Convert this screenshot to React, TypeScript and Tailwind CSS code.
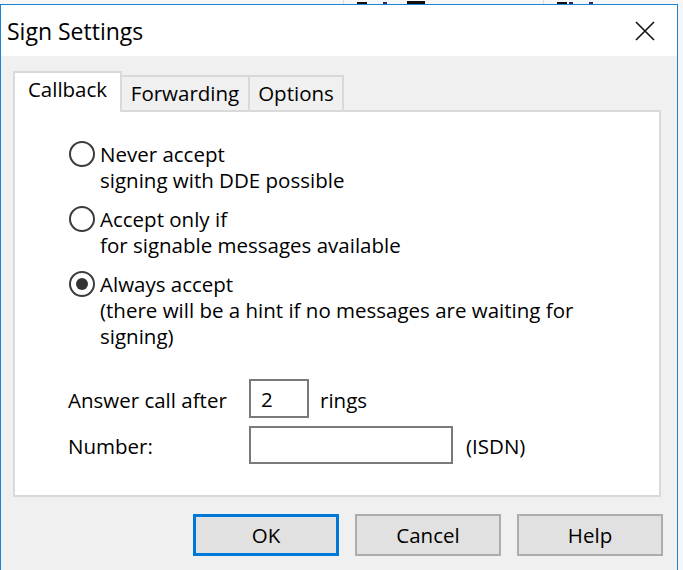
import React from "react";

const Radio = ({ checked }: { checked?: boolean }) => (
  <div className="h-[26px] flex items-center shrink-0">
    <div className="w-[26px] h-[26px] rounded-full border-2 border-[#3c3c3c] bg-white flex items-center justify-center">
      {checked && <div className="w-[12px] h-[12px] rounded-full bg-[#333333]" />}
    </div>
  </div>
);

const RadioOption = ({ checked, lines }: { checked?: boolean; lines: string[] }) => (
  <div className="flex gap-[5px]">
    <Radio checked={checked} />
    <div className="leading-[26px]">
      {lines.map((l) => (
        <div key={l}>{l}</div>
      ))}
    </div>
  </div>
);

// strip of the window lying behind the dialog
const BehindStrip = () => (
  <div className="flex items-end h-[4px] bg-[#f7f7f7]">
    <div className="w-[343px] shrink-0" />
    <div className="w-[1px] h-[4px] bg-[#dcdcdc] shrink-0" />
    <div className="w-[13px] shrink-0" />
    <div className="w-[10px] h-[2px] bg-[#111] shrink-0" />
    <div className="w-[16px] shrink-0" />
    <div className="w-[4px] h-[2px] bg-[#2a2a6a] shrink-0" />
    <div className="w-[20px] shrink-0" />
    <div className="w-[18px] h-[3px] bg-[#111] shrink-0" />
    <div className="w-[118px] shrink-0" />
    <div className="w-[1px] h-[4px] bg-[#dcdcdc] shrink-0" />
    <div className="w-[13px] shrink-0" />
    <div className="w-[10px] h-[2px] bg-[#111] shrink-0" />
    <div className="w-[2px] shrink-0" />
    <div className="w-[4px] h-[2px] bg-[#2a2a6a] shrink-0" />
    <div className="w-[16px] shrink-0" />
    <div className="w-[4px] h-[2px] bg-[#2a2a6a] shrink-0" />
  </div>
);

export default function App() {
  return (
    <div className="w-[683px] h-[570px] overflow-hidden bg-[#f5f5f5] flex flex-col font-['Open_Sans',sans-serif] text-black text-[20.5px]">
      <BehindStrip />
      <div className="flex flex-1">
        <div className="w-[678px] flex flex-col border-l border-r border-t border-[#1883d7] bg-[#f0f0f0]">
          {/* Title bar */}
          <div className="h-[51px] bg-white flex items-center justify-between pl-[6px] pr-[22px]">
            <span className="text-[23px] leading-none pt-[2px]">Sign Settings</span>
            <svg width="20" height="20" viewBox="0 0 20 20" className="shrink-0">
              <path d="M1 1 L19 19 M19 1 L1 19" stroke="#111" strokeWidth="1.6" fill="none" />
            </svg>
          </div>

          {/* Body */}
          <div className="flex-1 flex flex-col pt-[15px]">
            {/* Tabs */}
            <div className="flex items-end pl-[12px]">
              <div className="relative z-10 w-[109px] h-[41px] -mb-[2px] border-2 border-b-0 border-[#d9d9d9] bg-white flex items-center justify-center pb-[6px]">
                Callback
              </div>
              <div className="-ml-[2px] w-[130px] h-[35px] border-2 border-b-0 border-[#d9d9d9] bg-[#f0f0f0] flex items-center justify-center">
                Forwarding
              </div>
              <div className="-ml-[2px] w-[96px] h-[35px] border-2 border-b-0 border-[#d9d9d9] bg-[#f0f0f0] flex items-center justify-center">
                Options
              </div>
            </div>

            {/* Panel */}
            <div className="ml-[12px] w-[648px] h-[387px] border-2 border-[#d9d9d9] bg-white pt-[29px] pl-[53px]">
              <div className="ml-[1px] flex flex-col gap-[13px]">
                <RadioOption lines={["Never accept", "signing with DDE possible"]} />
                <RadioOption lines={["Accept only if", "for signable messages available"]} />
                <RadioOption
                  checked
                  lines={["Always accept", "(there will be a hint if no messages are waiting for", "signing)"]}
                />
              </div>

              <div className="mt-[30px] flex items-center h-[39px]">
                <div className="w-[181px] pt-[4px]">Answer call after</div>
                <div className="w-[60px] h-[39px] border-2 border-[#7a7a7a] flex items-center pl-[10px] pt-[1px]">2</div>
                <div className="ml-[11px] pt-[4px]">rings</div>
              </div>
              <div className="mt-[8px] flex items-center h-[38px]">
                <div className="w-[181px] pt-[2px]">Number:</div>
                <div className="w-[204px] h-[38px] border-2 border-[#7a7a7a]" />
                <div className="ml-[13px] pt-[2px]">(ISDN)</div>
              </div>
            </div>

            {/* Buttons */}
            <div className="mt-[17px] flex justify-end gap-[16px] pr-[14px]">
              <button className="w-[146px] h-[42px] border-[3px] border-[#0078d7] bg-[#e1e1e1] flex items-center justify-center">
                OK
              </button>
              <button className="w-[146px] h-[42px] border-2 border-[#adadad] bg-[#e1e1e1] flex items-center justify-center">
                Cancel
              </button>
              <button className="w-[146px] h-[42px] border-2 border-[#adadad] bg-[#e1e1e1] flex items-center justify-center">
                Help
              </button>
            </div>
          </div>
        </div>
      </div>
    </div>
  );
}
